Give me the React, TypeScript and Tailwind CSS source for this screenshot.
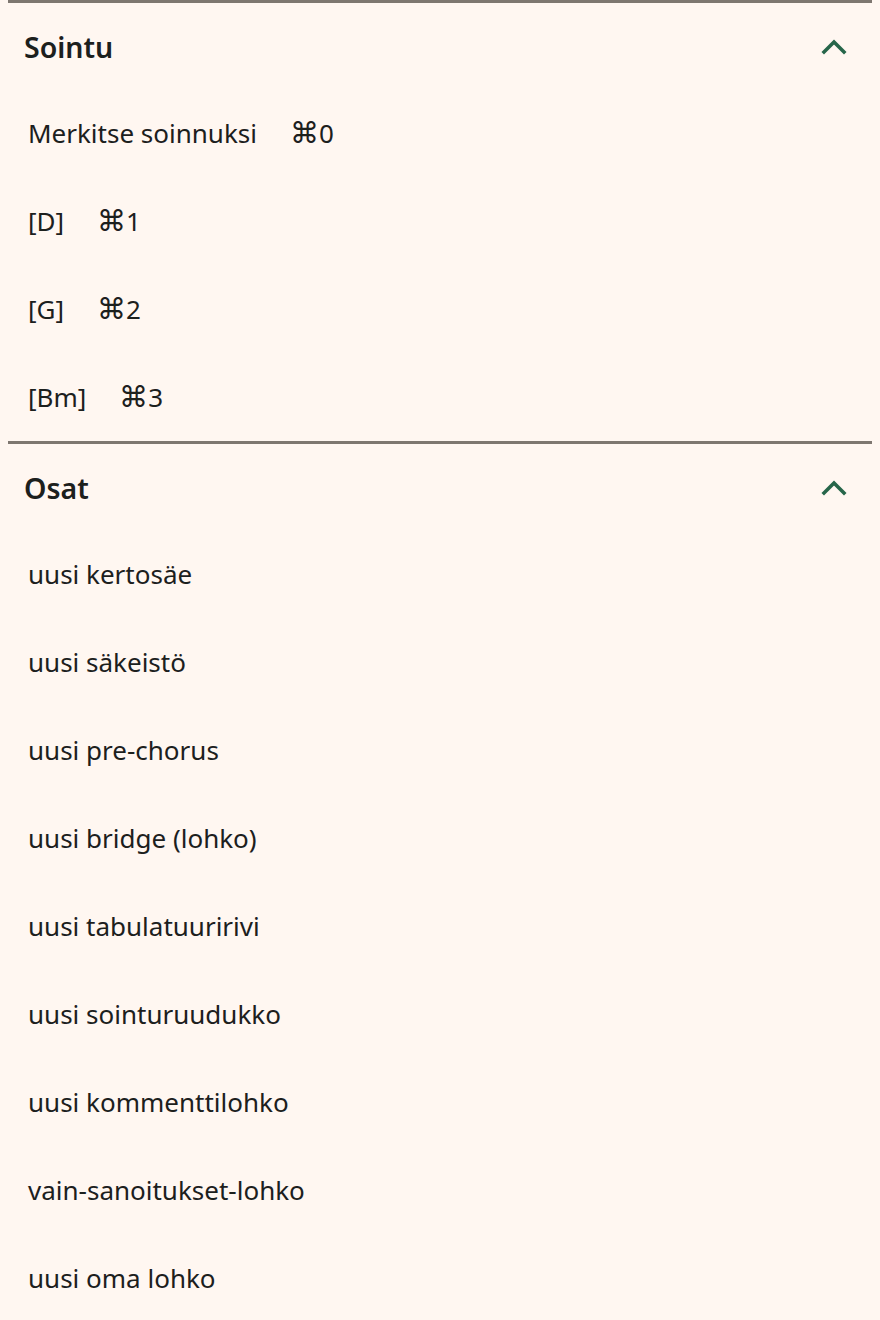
import React from "react";

function Chevron() {
  return (
    <svg width="28" height="18" viewBox="0 0 28 18" fill="none">
      <polyline points="4,14 14,4 24,14" stroke="#27664a" strokeWidth="3.6" strokeLinecap="square" strokeLinejoin="miter" />
    </svg>
  );
}

function Section({ title, items }: { title: string; items: { label: string; key?: string }[] }) {
  return (
    <section className="mx-2 border-t-[3px] border-[#7e7770]">
      <div className="flex h-[86px] items-center justify-between pl-4 pr-6 pt-[2px]">
        <h2 className="text-[28.5px] font-semibold text-[#1c201d]">{title}</h2>
        <Chevron />
      </div>
      {items.map((it) => (
        <div key={it.label} className="flex h-[88px] items-center gap-[33px] pl-5 text-[26px] text-[#1c201d]">
          <span>{it.label}</span>
          {it.key && (
            <span className="flex items-baseline">
              <span className="text-[29px] leading-none">⌘</span>
              <span>{it.key}</span>
            </span>
          )}
        </div>
      ))}
    </section>
  );
}

export default function App() {
  return (
    <div className="min-h-[1320px] bg-[#fff7f1]" style={{ fontFamily: '"Noto Sans", sans-serif' }}>
      <Section
        title="Sointu"
        items={[
          { label: "Merkitse soinnuksi", key: "0" },
          { label: "[D]", key: "1" },
          { label: "[G]", key: "2" },
          { label: "[Bm]", key: "3" },
        ]}
      />
      <Section
        title="Osat"
        items={[
          { label: "uusi kertosäe" },
          { label: "uusi säkeistö" },
          { label: "uusi pre-chorus" },
          { label: "uusi bridge (lohko)" },
          { label: "uusi tabulatuuririvi" },
          { label: "uusi sointuruudukko" },
          { label: "uusi kommenttilohko" },
          { label: "vain-sanoitukset-lohko" },
          { label: "uusi oma lohko" },
        ]}
      />
    </div>
  );
}
